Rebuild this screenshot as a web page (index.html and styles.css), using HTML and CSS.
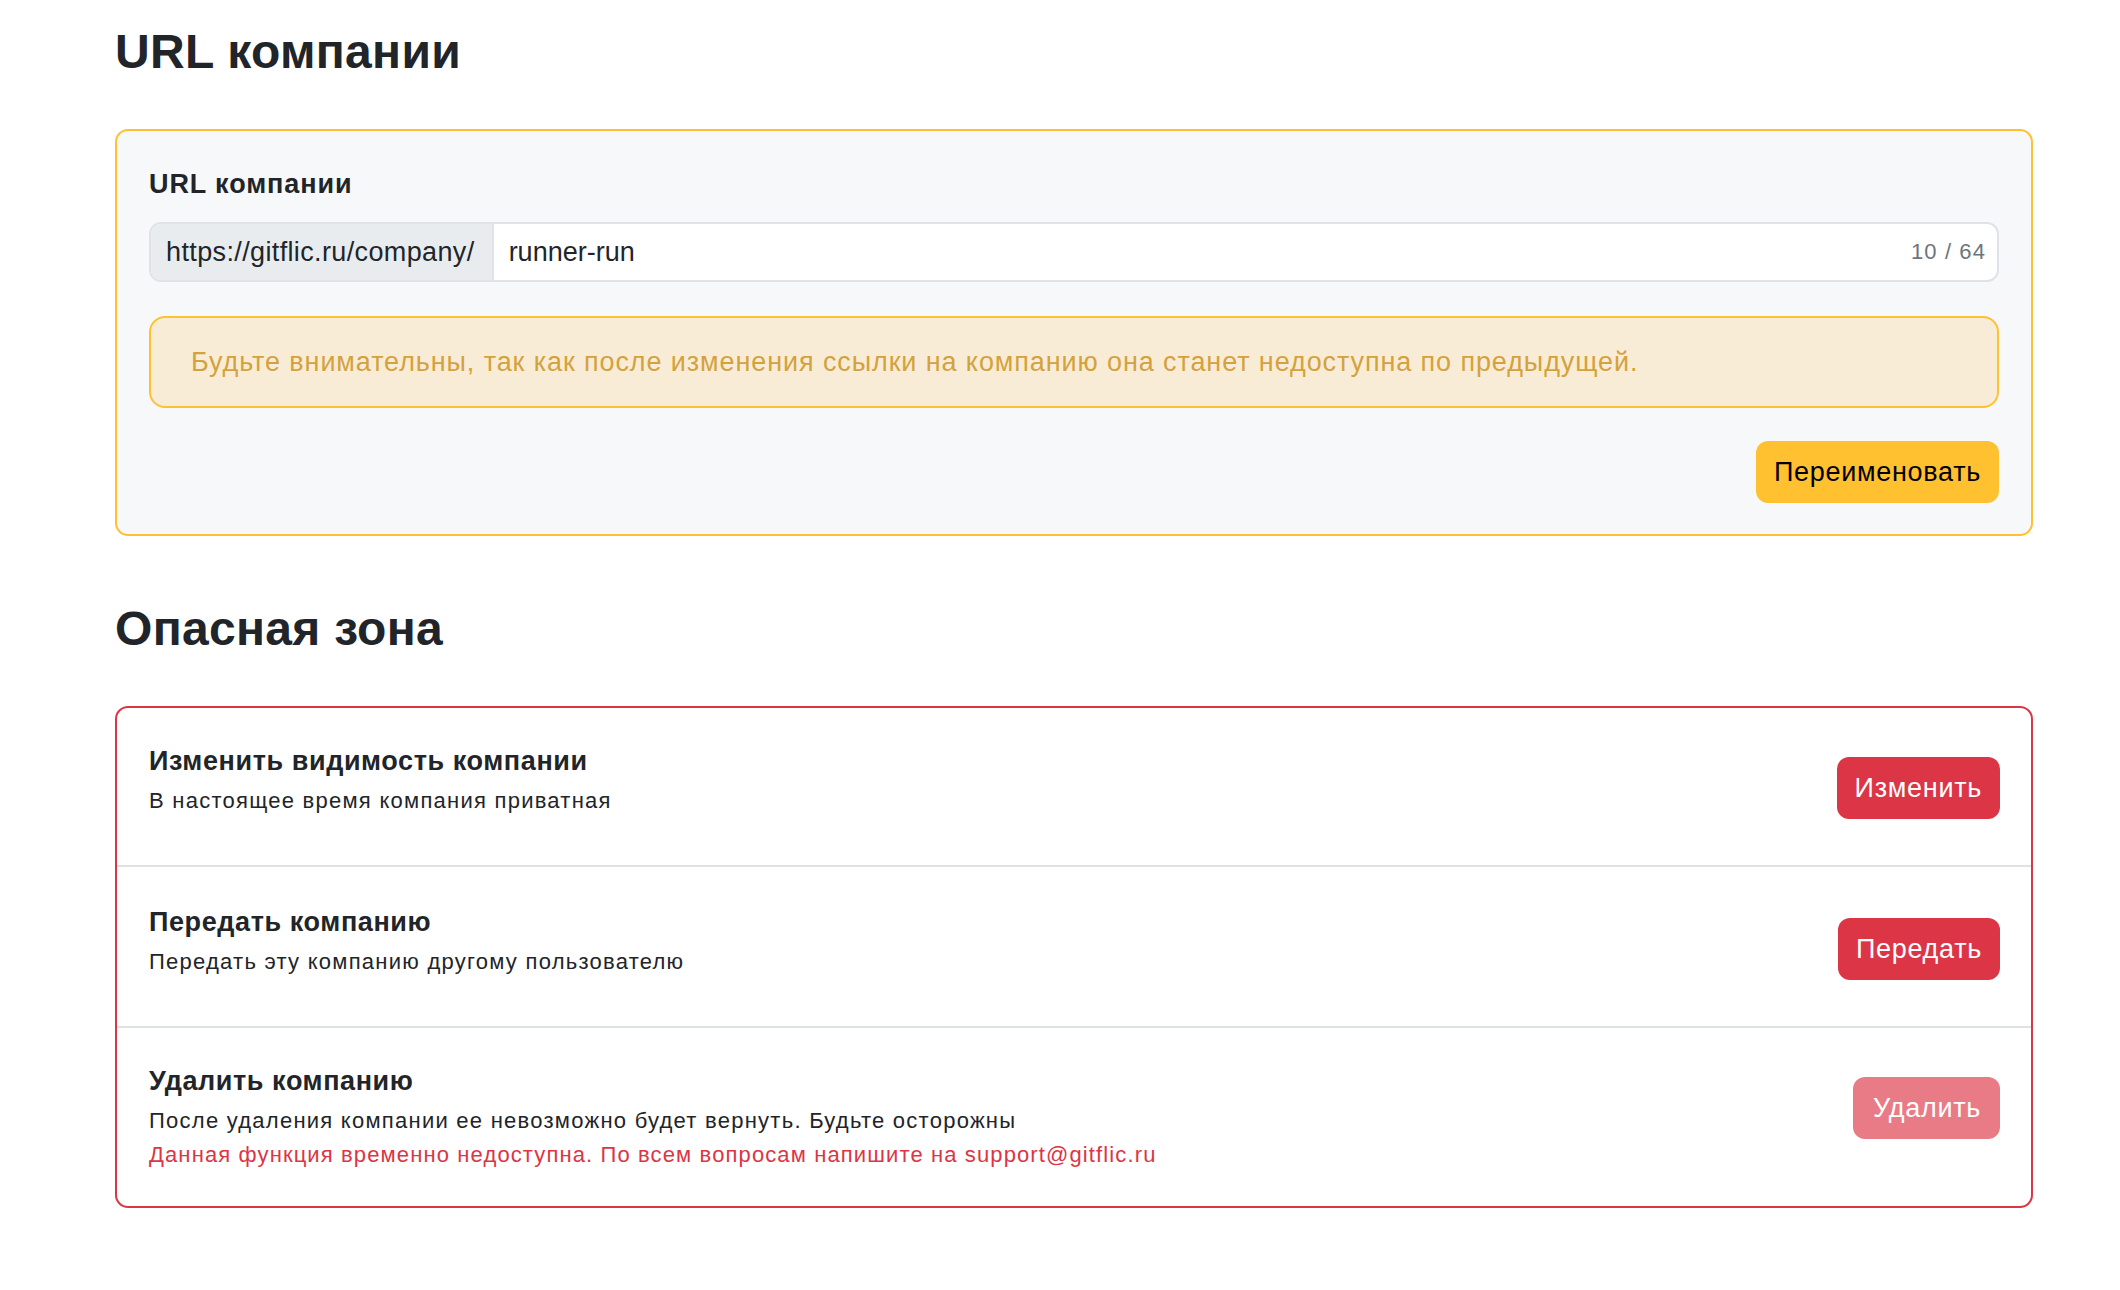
FILE: index.html
```html
<!DOCTYPE html>
<html lang="ru">
<head>
<meta charset="utf-8">
<title>URL компании</title>
<link rel="stylesheet" href="styles.css">
</head>
<body>
<main class="page">
  <h2 class="section-title">URL компании</h2>
  <section class="card card-warning">
    <div class="field-label">URL компании</div>
    <div class="input-group">
      <span class="input-prefix">https://gitflic.ru/company/</span>
      <div class="input-field">
        <span class="input-value">runner-run</span>
        <span class="input-counter">10 / 64</span>
      </div>
    </div>
    <div class="alert">Будьте внимательны, так как после изменения ссылки на компанию она станет недоступна по предыдущей.</div>
    <div class="actions">
      <button class="btn btn-warning">Переименовать</button>
    </div>
  </section>

  <h2 class="section-title second">Опасная зона</h2>
  <section class="card card-danger">
    <div class="danger-row">
      <div class="row-main">
        <div class="info">
          <div class="row-title">Изменить видимость компании</div>
          <div class="row-desc">В настоящее время компания приватная</div>
        </div>
        <button class="btn btn-danger">Изменить</button>
      </div>
    </div>
    <div class="danger-row">
      <div class="row-main">
        <div class="info">
          <div class="row-title">Передать компанию</div>
          <div class="row-desc">Передать эту компанию другому пользователю</div>
        </div>
        <button class="btn btn-danger">Передать</button>
      </div>
    </div>
    <div class="danger-row">
      <div class="row-main">
        <div class="info">
          <div class="row-title">Удалить компанию</div>
          <div class="row-desc">После удаления компании ее невозможно будет вернуть. Будьте осторожны</div>
        </div>
        <button class="btn btn-danger disabled">Удалить</button>
      </div>
      <div class="row-error">Данная функция временно недоступна. По всем вопросам напишите на support@gitflic.ru</div>
    </div>
  </section>
</main>
</body>
</html>
```

FILE: styles.css
```css
* { box-sizing: border-box; }
html, body { margin: 0; padding: 0; background: #ffffff; }
body {
  font-family: "Liberation Sans", Arial, Helvetica, sans-serif;
  color: #212529;
  font-size: 22px;
}
.page {
  padding: 23px 87px 40px 115px;
}
.section-title {
  margin: 0 0 49px 0;
  font-size: 48px;
  line-height: 57px;
  font-weight: 700;
  letter-spacing: 0.3px;
  color: #212529;
}
.section-title.second {
  margin-top: 64px;
  margin-bottom: 49px;
}
.card {
  border-radius: 13px;
  border: 2px solid;
}
.card-warning {
  border-color: #ffc12f;
  background: #f7f8fa;
  padding: 33px 32px 31px 32px;
}
.field-label {
  font-size: 27px;
  font-weight: 700;
  line-height: 40px;
  letter-spacing: 0.9px;
  margin-bottom: 18px;
}
.input-group {
  display: flex;
  height: 60px;
  border: 2px solid #dfe2e6;
  border-radius: 12px;
  overflow: hidden;
  background: #ffffff;
}
.input-prefix {
  display: flex;
  align-items: center;
  padding: 0 17px 0 15px;
  background: #e9ecef;
  border-right: 2px solid #dfe2e6;
  font-size: 27px;
  letter-spacing: 0.37px;
  color: #212529;
  white-space: nowrap;
}
.input-field {
  flex: 1;
  display: flex;
  align-items: center;
  justify-content: space-between;
  padding: 0 11px 0 15px;
}
.input-value {
  font-size: 27px;
  color: #212529;
}
.input-counter {
  font-size: 22px;
  letter-spacing: 1.1px;
  color: #6c757d;
}
.alert {
  margin-top: 34px;
  height: 92px;
  display: flex;
  align-items: center;
  padding: 0 40px;
  background: #f9ecd6;
  border: 2px solid #ffc12f;
  border-radius: 16px;
  color: #d4a23c;
  font-size: 27px;
  letter-spacing: 0.9px;
}
.actions {
  display: flex;
  justify-content: flex-end;
  margin-top: 33px;
}
.btn {
  font-family: "Liberation Sans", Arial, Helvetica, sans-serif;
  font-size: 27px;
  letter-spacing: 0.7px;
  height: 62px;
  padding: 0 18px;
  border: none;
  border-radius: 12px;
  line-height: 62px;
  cursor: pointer;
}
.btn-warning {
  background: #ffc12f;
  color: #000000;
}
.btn-danger {
  background: #dc3545;
  color: #ffffff;
}
.btn-danger.disabled {
  background: #e87b86;
  padding: 0 19px 0 20px;
}
.card-danger {
  border-color: #dc3545;
  background: #ffffff;
}
.danger-row {
  padding: 39px 31px 35px 32px;
  border-bottom: 2px solid #dee2e6;
}
.danger-row:first-child {
  padding-top: 37px;
}
.danger-row:last-child {
  border-bottom: none;
  padding-top: 37px;
  padding-bottom: 35px;
}
.row-main {
  display: flex;
  align-items: center;
  justify-content: space-between;
}
.info {
  padding-bottom: 13px;
}
.row-title {
  font-size: 27px;
  font-weight: 700;
  line-height: 32px;
  letter-spacing: 0.6px;
  margin-bottom: 7px;
}
.row-desc {
  font-size: 22px;
  line-height: 33px;
  letter-spacing: 1.25px;
}
.row-error {
  margin-top: -12px;
  font-size: 22px;
  line-height: 33px;
  letter-spacing: 1.12px;
  color: #dc3545;
}
```
